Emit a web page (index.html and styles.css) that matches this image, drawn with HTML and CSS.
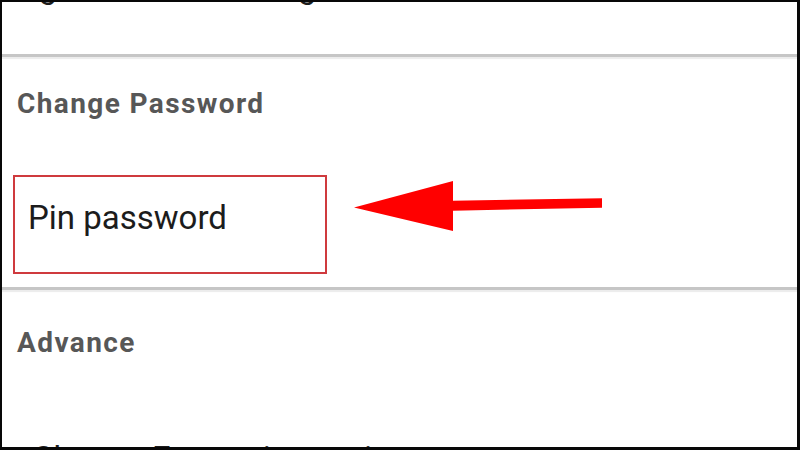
FILE: index.html
```html
<!DOCTYPE html>
<html lang="en">
<head>
    <meta charset="UTF-8">
    <meta name="viewport" content="width=device-width, initial-scale=1.0">
    <title>Settings</title>
    <link rel="stylesheet" href="styles.css">
</head>
<body>
    <div class="screen">
        <div class="list">
            <div class="item top-item">Ignore other settings</div>
            <div class="divider"></div>
            <h3 class="section">Change Password</h3>
            <div class="item pin">Pin password</div>
            <div class="divider second"></div>
            <h3 class="section advance">Advance</h3>
            <div class="item last-item">Change Encryption option</div>
        </div>
        <!-- red pointer -->
        <svg class="arrow" width="260" height="60" viewBox="350 178 260 60">
            <polygon points="354,207.5 453,181 453,200.7 602,198.3 602,207.7 453,210.7 453,231" fill="#ff0000"/>
        </svg>
    </div>
</body>
</html>
```

FILE: styles.css
```css
* {
    margin: 0;
    padding: 0;
    box-sizing: border-box;
}

body {
    background: #000000;
    width: 800px;
    height: 450px;
    overflow: hidden;
}

.screen {
    position: relative;
    width: 800px;
    height: 450px;
    background: #ffffff;
    border-style: solid;
    border-color: #080808;
    border-width: 2px 3px 3px 2px;
    overflow: hidden;
    font-family: Roboto, "Liberation Sans", sans-serif;
}

.list {
    margin-top: -33px;
}

.item {
    font-size: 33px;
    line-height: 36px;
    color: #1c1c1c;
    padding-left: 28px;
}

.top-item {
    padding-bottom: 49px;
    white-space: nowrap;
}

.divider {
    height: 3px;
    background: #c6c6c6;
    box-shadow: 0 2px 1px #ececec;
}

.second {
    margin-top: 13px;
}

.section {
    font-size: 28px;
    line-height: 30px;
    font-weight: 700;
    letter-spacing: 1.4px;
    color: #575757;
    padding-left: 15px;
    margin-top: 32px;
}

.advance {
    margin-top: 38px;
}

.pin {
    width: 314px;
    margin: 56px 0 0 11px;
    padding: 23px 0 36px 13px;
    border: 2px solid #cf3a3e;
}

.last-item {
    margin-top: 83px;
    padding-left: 30px;
    white-space: nowrap;
}

.arrow {
    position: absolute;
    left: 348px;
    top: 176px;
}
```
